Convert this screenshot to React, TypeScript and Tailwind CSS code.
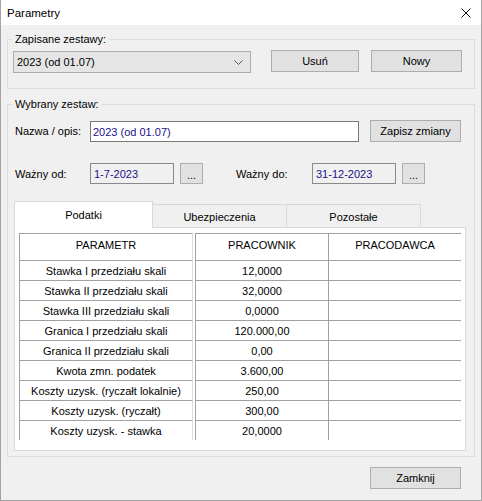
import React from 'react';

const rows: [string, string][] = [
  ['Stawka I przedziału skali', '12,0000'],
  ['Stawka II przedziału skali', '32,0000'],
  ['Stawka III przedziału skali', '0,0000'],
  ['Granica I przedziału skali', '120.000,00'],
  ['Granica II przedziału skali', '0,00'],
  ['Kwota zmn. podatek', '3.600,00'],
  ['Koszty uzysk. (ryczałt lokalnie)', '250,00'],
  ['Koszty uzysk. (ryczałt)', '300,00'],
  ['Koszty uzysk. - stawka', '20,0000'],
];

function Btn({ className, children }: { className: string; children: React.ReactNode }) {
  return (
    <div className={`h-[22px] shrink-0 flex items-center justify-center bg-[#e1e1e1] border border-[#adadad] ${className}`}>
      {children}
    </div>
  );
}

function GridRow({ a, b, c, header }: { a: string; b: string; c: string; header?: boolean }) {
  const h = header ? 'h-[27px] pb-[4px]' : 'h-[20px]';
  return (
    <div className="flex">
      <div className={`w-[174px] ${h} flex items-center justify-center border-l border-t border-r border-l-[#a0a0a0] border-t-[#a0a0a0] border-r-[#dcdcdc]`}>
        {a}
      </div>
      <div className={`ml-[2px] w-[133px] ${h} flex items-center justify-center border-l border-t border-[#a0a0a0]`}>
        {b}
      </div>
      <div className={`w-[133px] ${h} flex items-center justify-center border-l border-t border-[#a0a0a0]`}>
        {c}
      </div>
    </div>
  );
}

export default function App() {
  return (
    <div className="w-[482px] h-[501px] flex flex-col bg-[#f0f0f0] border-x border-b border-[#a3a3a3] font-['Liberation_Sans',Arial,sans-serif] text-[11px] leading-[14px] text-black">
      {/* title bar */}
      <div className="h-[25px] shrink-0 bg-white flex items-center justify-between pl-[6px] pr-[10px]">
        <span className="text-[11.5px]">Parametry</span>
        <svg width="10" height="10" viewBox="0 0 10 10">
          <path d="M0.5 0.5L9.5 9.5M9.5 0.5L0.5 9.5" stroke="#111" strokeWidth="1" />
        </svg>
      </div>

      <div className="flex-1 flex flex-col px-[6px]">
        {/* saved sets */}
        <fieldset className="mt-[7px] border border-[#dcdcdc] pl-[5px] pt-[4px] pb-[15px]">
          <legend className="ml-[-1px] px-[3px]">Zapisane zestawy:</legend>
          <div className="flex items-start">
            <div className="mt-[1px] w-[238px] h-[22px] flex items-center justify-between bg-[#e5e5e5] border border-[#acacac] pl-[3px] pr-[7px]">
              <span>2023 (od 01.07)</span>
              <svg width="9" height="5" viewBox="0 0 9 5">
                <path d="M0.5 0.5L4.5 4.5L8.5 0.5" fill="none" stroke="#555" strokeWidth="1" />
              </svg>
            </div>
            <Btn className="ml-[20px] w-[88px]">Usuń</Btn>
            <Btn className="ml-[12px] w-[91px]">Nowy</Btn>
          </div>
        </fieldset>

        {/* selected set */}
        <fieldset className="mt-[8px] border border-[#dcdcdc] pl-[6px] pt-[9px] pb-[5px]">
          <legend className="ml-[-2px] px-[3px]">Wybrany zestaw:</legend>
          <div className="flex items-start">
            <div className="w-[76px] pl-[1px] h-[22px] flex items-center">Nazwa / opis:</div>
            <div className="mt-[1px] w-[269px] h-[21px] flex items-center bg-white border border-[#7a7a7a] pl-[2px] text-[#20108a]">
              2023 (od 01.07)
            </div>
            <Btn className="ml-[11px] w-[91px]">Zapisz zmiany</Btn>
          </div>

          <div className="mt-[21px] flex items-center">
            <div className="w-[76px] pl-[1px]">Ważny od:</div>
            <div className="w-[84px] h-[21px] flex items-center bg-[#f0f0f0] border border-[#8a8a8a] pl-[3px] text-[#20108a]">
              1-7-2023
            </div>
            <div className="ml-[6px] w-[23px] h-[21px] flex items-center justify-center bg-[#e1e1e1] border border-[#adadad] pt-[2px]">...</div>
            <div className="ml-[33px] w-[76px]">Ważny do:</div>
            <div className="w-[84px] h-[21px] flex items-center bg-[#f0f0f0] border border-[#8a8a8a] pl-[3px] text-[#20108a]">
              31-12-2023
            </div>
            <div className="ml-[6px] w-[23px] h-[21px] flex items-center justify-center bg-[#e1e1e1] border border-[#adadad] pt-[2px]">...</div>
          </div>

          {/* tabs */}
          <div className="mt-[17px] flex items-end">
            <div className="relative z-10 -mb-[1px] w-[139px] h-[27px] flex items-center justify-center pb-[1px] bg-white border-l border-t border-r border-[#d9d9d9]">
              Podatki
            </div>
            <div className="w-[134px] h-[23px] flex items-center justify-center pt-[1px] bg-[#f0f0f0] border-t border-r border-[#d9d9d9]">
              Ubezpieczenia
            </div>
            <div className="w-[134px] h-[23px] flex items-center justify-center pt-[1px] bg-[#f0f0f0] border-t border-r border-[#d9d9d9]">
              Pozostałe
            </div>
          </div>
          <div className="w-[452px] h-[224px] bg-white border border-[#d9d9d9] pt-[5px] pl-[4px]">
            <GridRow header a="PARAMETR" b="PRACOWNIK" c="PRACODAWCA" />
            {rows.map(([a, b]) => (
              <GridRow key={a} a={a} b={b} c="" />
            ))}
          </div>
        </fieldset>

        <div className="flex justify-end mt-[10px] pr-[14px]">
          <Btn className="w-[91px]">Zamknij</Btn>
        </div>
      </div>
    </div>
  );
}
